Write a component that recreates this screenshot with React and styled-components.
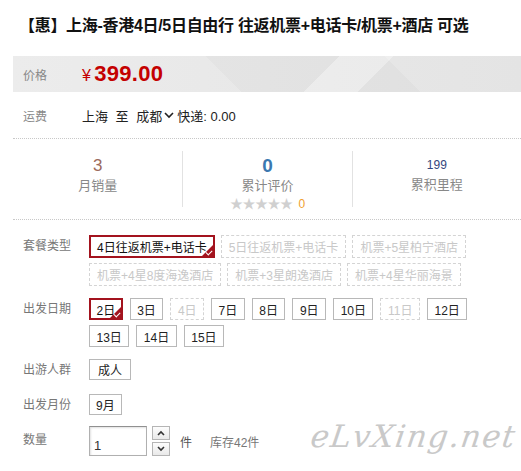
import React from "react";
import styled, { createGlobalStyle, css } from "styled-components";

const GlobalStyle = createGlobalStyle`
  body {
    margin: 0;
    background: #fff;
    font-family: "Liberation Sans", "Noto Sans CJK SC", sans-serif;
    color: #333;
  }
`;

const Page = styled.div`
  position: relative;
  width: 521px;
  height: 471px;
  overflow: hidden;
  padding-left: 13px;
  box-sizing: border-box;
`;

const Title = styled.h1`
  margin: 0;
  padding: 16px 0 0 6px;
  height: 56px;
  box-sizing: border-box;
  font-size: 16px;
  line-height: 20px;
  font-weight: bold;
  letter-spacing: -0.3px;
  color: #111;
  white-space: nowrap;
`;

const PriceBar = styled.div`
  display: flex;
  align-items: center;
  height: 36px;
  padding-left: 10px;
  background:
    linear-gradient(135deg, transparent 0 60%, rgba(255,255,255,0.35) 60% 70%, transparent 70%),
    linear-gradient(45deg, transparent 0 42%, rgba(0,0,0,0.025) 42% 75%, transparent 75%),
    linear-gradient(90deg, #ececec 0%, #e8e8e8 50%, #e4e4e4 100%);
`;

const Label = styled.span`
  flex: 0 0 ${(p) => p.$w || 59}px;
  font-size: 12px;
  color: #888;
`;

const Price = styled.span`
  color: #c40000;
  font-weight: bold;
  font-size: 22px;
  letter-spacing: 0.3px;
  small {
    font-size: 16px;
    font-weight: normal;
    margin-right: 3px;
  }
`;

const FreightRow = styled.div`
  display: flex;
  align-items: center;
  height: 46px;
  padding-left: 10px;
  border-bottom: 1px dotted #c8c8c8;
  font-size: 13px;
  color: #222;
`;

const Spaced = styled.span`
  word-spacing: 4px;
`;

const Chevron = styled.svg`
  width: 10px;
  height: 8px;
  margin: 0 3px 0 2px;
`;

const Stats = styled.div`
  display: grid;
  grid-template-columns: repeat(3, 1fr);
  height: 80px;
  align-items: center;
  border-bottom: 1px dotted #c8c8c8;
`;

const Stat = styled.div`
  display: flex;
  flex-direction: column;
  align-items: center;
  height: 56px;
  padding-top: ${(p) => p.$top || 0}px;
  box-sizing: border-box;
  border-left: ${(p) => (p.$first ? "none" : "1px solid #e2e2e2")};
`;

const StatNum = styled.span`
  line-height: 20px;
  font-size: ${(p) => p.$size}px;
  font-weight: ${(p) => (p.$bold ? "bold" : "normal")};
  color: ${(p) => p.$color};
`;

const StatLabel = styled.span`
  font-size: 13px;
  line-height: 20px;
  color: #888;
`;

const Stars = styled.span`
  font-size: 13px;
  line-height: 16px;
  color: #d0d0d0;
  letter-spacing: -0.5px;
  em {
    font-style: normal;
    font-size: 12px;
    color: #f0a030;
    margin-left: 6px;
    letter-spacing: 0;
  }
`;

const Form = styled.div`
  display: flex;
  flex-direction: column;
  gap: 12px;
  padding: 15px 0 0 10px;
`;

const FieldRow = styled.div`
  display: flex;
  align-items: flex-start;
`;

const FieldLabel = styled.span`
  flex: 0 0 66px;
  font-size: 12px;
  line-height: 23px;
  color: #777;
`;

const Options = styled.div`
  display: flex;
  flex-wrap: wrap;
  gap: 5px ${(p) => p.$gap || 7}px;
  width: 400px;
`;

const Opt = styled.span`
  position: relative;
  display: inline-flex;
  align-items: center;
  height: ${(p) => p.$h || 23}px;
  padding: 0 ${(p) => p.$pad || 7}px;
  box-sizing: border-box;
  font-size: 12px;
  white-space: nowrap;
  border: 1px solid #b8b8b8;
  color: #222;
  background: #fff;
  ${(p) =>
    p.$off &&
    css`
      border: 1px dashed #d4d4d4;
      color: #c8c8c8;
    `}
  ${(p) =>
    p.$on &&
    css`
      border: 2px solid #a3131e;
      padding: 0 ${(p.$pad || 7) - 1}px;
      color: #111;
      &::after {
        content: "";
        position: absolute;
        right: 0;
        bottom: 0;
        border-style: solid;
        border-width: 0 0 11px 11px;
        border-color: transparent transparent #a3131e transparent;
      }
      &::before {
        content: "";
        position: absolute;
        right: 1px;
        bottom: 2px;
        width: 5px;
        height: 3px;
        border-left: 1.5px solid #fff;
        border-bottom: 1.5px solid #fff;
        transform: rotate(-45deg);
        z-index: 1;
      }
    `}
`;

const QtyWrap = styled.div`
  display: flex;
  align-items: center;
  gap: 5px;
  margin-top: -3px;
  font-size: 12px;
  color: #555;
`;

const QtyInput = styled.div`
  width: 58px;
  height: 30px;
  box-sizing: border-box;
  border: 1px solid #b0b0b0;
  border-top-color: #909090;
  box-shadow: inset 1px 1px 2px rgba(0,0,0,0.12);
  font-size: 13px;
  color: #333;
  padding: 11px 0 0 4px;
  line-height: 16px;
`;

const Spin = styled.div`
  display: flex;
  flex-direction: column;
  gap: 2px;
  margin-right: 5px;
`;

const SpinBtn = styled.span`
  display: flex;
  align-items: center;
  justify-content: center;
  width: 18px;
  height: 14px;
  box-sizing: border-box;
  border: 1px solid #b5b5b5;
  background: linear-gradient(#fdfdfd, #e9e9e9);
  svg {
    width: 8px;
    height: 6px;
  }
`;

const Stock = styled.span`
  margin-left: 13px;
  color: #777;
`;

const Watermark = styled.div`
  position: absolute;
  left: 311px;
  top: 418px;
  font-family: "DejaVu Serif", serif;
  font-style: italic;
  font-size: 31px;
  letter-spacing: 1.5px;
  color: #c9c9c9;
  transform: skewX(-8deg);
`;

const packages = [
  { t: "4日往返机票+电话卡", on: true },
  { t: "5日往返机票+电话卡", off: true },
  { t: "机票+5星柏宁酒店", off: true },
  { t: "机票+4星8度海逸酒店", off: true },
  { t: "机票+3星朗逸酒店", off: true },
  { t: "机票+4星华丽海景", off: true },
];

const dates = [
  { t: "2日", on: true },
  { t: "3日" },
  { t: "4日", off: true },
  { t: "7日" },
  { t: "8日" },
  { t: "9日" },
  { t: "10日" },
  { t: "11日", off: true },
  { t: "12日" },
  { t: "13日" },
  { t: "14日" },
  { t: "15日" },
];

const Arrow = ({ up }) => (
  <svg viewBox="0 0 8 6">
    <path
      d={up ? "M1 5 L4 2 L7 5" : "M1 1 L4 4 L7 1"}
      fill="none"
      stroke="#333"
      strokeWidth="1.6"
    />
  </svg>
);

export default function App() {
  return (
    <Page>
      <GlobalStyle />
      <Title>【惠】上海-香港4日/5日自由行 往返机票+电话卡/机票+酒店 可选</Title>

      <PriceBar>
        <Label>价格</Label>
        <Price>
          <small>¥</small>399.00
        </Price>
      </PriceBar>

      <FreightRow>
        <Label>运费</Label>
        <Spaced>上海 至 成都</Spaced>
        <Chevron viewBox="0 0 10 8">
          <path d="M1 2 L5 6 L9 2" fill="none" stroke="#222" strokeWidth="1.6" />
        </Chevron>
        快递: 0.00
      </FreightRow>

      <Stats>
        <Stat $first $top={5}>
          <StatNum $size={17} $color="#9c6a5c">3</StatNum>
          <StatLabel>月销量</StatLabel>
        </Stat>
        <Stat $top={5}>
          <StatNum $size={19} $bold $color="#3b78b0">0</StatNum>
          <StatLabel>累计评价</StatLabel>
          <Stars>
            ★★★★★<em>0</em>
          </Stars>
        </Stat>
        <Stat $top={4}>
          <StatNum $size={12} $color="#34467e">199</StatNum>
          <StatLabel>累积里程</StatLabel>
        </Stat>
      </Stats>

      <Form>
        <FieldRow>
          <FieldLabel>套餐类型</FieldLabel>
          <Options $gap={6}>
            {packages.map((p) => (
              <Opt key={p.t} $on={p.on} $off={p.off}>
                {p.t}
              </Opt>
            ))}
          </Options>
        </FieldRow>

        <FieldRow>
          <FieldLabel>出发日期</FieldLabel>
          <Options>
            {dates.map((d) => (
              <Opt key={d.t} $on={d.on} $off={d.off} $pad={6.5} $h={22}>
                {d.t}
              </Opt>
            ))}
          </Options>
        </FieldRow>

        <FieldRow>
          <FieldLabel>出游人群</FieldLabel>
          <Options>
            <Opt $pad={8} $h={21}>成人</Opt>
          </Options>
        </FieldRow>

        <FieldRow>
          <FieldLabel>出发月份</FieldLabel>
          <Options>
            <Opt $pad={6} $h={21}>9月</Opt>
          </Options>
        </FieldRow>

        <FieldRow>
          <FieldLabel>数量</FieldLabel>
          <QtyWrap>
            <QtyInput>1</QtyInput>
            <Spin>
              <SpinBtn>
                <Arrow up />
              </SpinBtn>
              <SpinBtn>
                <Arrow />
              </SpinBtn>
            </Spin>
            件<Stock>库存42件</Stock>
          </QtyWrap>
        </FieldRow>
      </Form>

      <Watermark>eLvXing.net</Watermark>
    </Page>
  );
}
